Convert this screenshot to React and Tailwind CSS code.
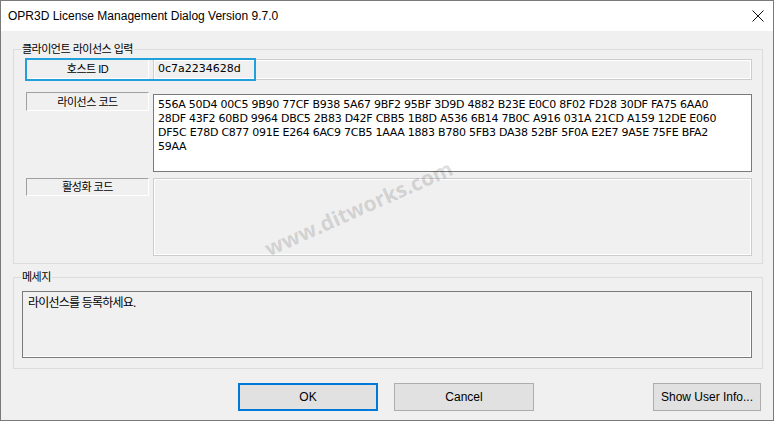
export default function App() {
  const licenseLines = [
    "556A 50D4 00C5 9B90 77CF B938 5A67 9BF2 95BF 3D9D 4882 B23E E0C0 8F02 FD28 30DF FA75 6AA0",
    "28DF 43F2 60BD 9964 DBC5 2B83 D42F CBB5 1B8D A536 6B14 7B0C A916 031A 21CD A159 12DE E060",
    "DF5C E78D C877 091E E264 6AC9 7CB5 1AAA 1883 B780 5FB3 DA38 52BF 5F0A E2E7 9A5E 75FE BFA2",
    "59AA",
  ];

  // static label look: sunken edge
  const labelBox =
    "w-[123px] shrink-0 flex justify-center border-t border-l border-[#a0a0a0] border-b-white border-r-white border-b border-r text-[11px] tracking-[-0.5px]";

  return (
    <div className="relative w-[774px] h-[421px] flex flex-col overflow-hidden border border-[#7a7a7a] bg-[#f0f0f0] text-black font-['Liberation_Sans','Noto_Sans_CJK_KR',sans-serif]">
      {/* Title bar */}
      <div className="h-[30px] shrink-0 bg-white flex items-center justify-between pl-[7px] pr-[9px]">
        <span className="text-[12px] leading-none">OPR3D License Management Dialog Version 9.7.0</span>
        <svg width="12" height="12" viewBox="0 0 12 12">
          <path d="M0.5 0.5L11.5 11.5M11.5 0.5L0.5 11.5" stroke="#111" strokeWidth="1" />
        </svg>
      </div>

      {/* Client license group */}
      <fieldset className="mt-[10px] ml-[12px] w-[750px] border border-[#dcdcdc] p-0 m-0">
        <legend className="ml-[7px] px-[1px] text-[11px] leading-[16px] tracking-[-0.5px]">
          클라이언트 라이선스 입력
        </legend>
        <div className="flex flex-col pl-[12px] pr-[10px] pt-[2px] pb-[7px]">
          <div className="flex gap-[4px]">
            <div className={labelBox + " h-[20px] items-center"}>호스트 ID</div>
            <div className="w-[599px] h-[21px] flex items-center pl-[4px] border border-[#cccccc] shadow-[inset_1px_1px_0_#fff,inset_-1px_-1px_0_#fff] font-['DejaVu_Sans',sans-serif] text-[11px] tracking-[0px]">
              0c7a2234628d
            </div>
          </div>

          <div className="flex gap-[4px] mt-[12px]">
            <div className={labelBox + " h-[19px] pt-[1px]"}>라이선스 코드</div>
            <div className="mt-[2px] w-[599px] h-[78px] bg-white border border-[#7a7a7a] pl-[4px] pt-[3px] font-['DejaVu_Sans',sans-serif] text-[11px] leading-[14px] tracking-[-0.25px] whitespace-nowrap">
              {licenseLines.map((l) => (
                <div key={l}>{l}</div>
              ))}
            </div>
          </div>

          <div className="flex gap-[4px] mt-[6px]">
            <div className={labelBox + " h-[18px]"}>활성화 코드</div>
            <div className="w-[599px] h-[78px] border border-[#cccccc] shadow-[inset_1px_1px_0_#fff,inset_-1px_-1px_0_#fff]" />
          </div>
        </div>
      </fieldset>

      {/* Message group */}
      <fieldset className="mt-[5px] ml-[12px] w-[750px] border border-[#dcdcdc] p-0 m-0">
        <legend className="ml-[7px] px-[1px] text-[11px] leading-[16px] tracking-[-0.5px]">메세지</legend>
        <div className="pl-[8px] pr-[10px] pt-[6px] pb-[10px]">
          <div className="w-[730px] h-[67px] border border-[#7a7a7a] shadow-[inset_-1px_-1px_0_#fff] pl-[5px] pt-[4px] text-[12px] leading-[14px] tracking-[-0.8px]">
            라이선스를 등록하세요.
          </div>
        </div>
      </fieldset>

      {/* Buttons */}
      <div className="flex mt-[14px] pl-[237px]">
        <button className="w-[140px] h-[28px] bg-[#e1e1e1] border-2 border-[#0078d7] text-[12px]">OK</button>
        <button className="ml-[16px] w-[140px] h-[28px] bg-[#e1e1e1] border border-[#adadad] text-[12px]">
          Cancel
        </button>
        <button className="ml-[119px] w-[108px] h-[28px] bg-[#e1e1e1] border border-[#adadad] text-[12px]">
          Show User Info...
        </button>
      </div>

      {/* focus highlight over host id */}
      <div className="absolute left-[24px] top-[57px] w-[231px] h-[23px] border-2 border-[#22a0db] pointer-events-none" />

      {/* watermark */}
      <div className="absolute left-[238px] top-[195px] w-[240px] h-[26px] flex items-center justify-center rotate-[-24deg] pointer-events-none">
        <span className="font-['Open_Sans',sans-serif] font-bold text-[21px] text-black/15 whitespace-nowrap">
          www.ditworks.com
        </span>
      </div>
    </div>
  );
}
